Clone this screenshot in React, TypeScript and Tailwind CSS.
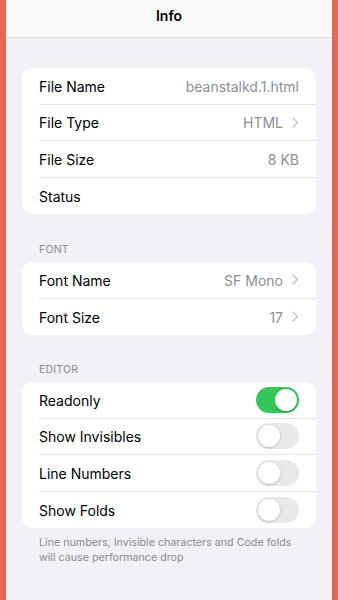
import React from "react";

const Chevron = () => (
  <svg width="7" height="11" viewBox="0 0 7 11" className="ml-[9px]" fill="none">
    <path d="M1.2 1.2L5.4 5.5L1.2 9.8" stroke="#c4c4c7" strokeWidth="1.4" strokeLinecap="round" strokeLinejoin="round" />
  </svg>
);

const Toggle = ({ on }: { on: boolean }) => (
  <div
    className={
      on
        ? "w-[43px] h-[26px] rounded-full bg-[#34c759] p-[2px] flex justify-end"
        : "w-[43px] h-[26px] rounded-full bg-[#e9e9eb] p-[2px] flex justify-start"
    }
  >
    <div className="w-[22px] h-[22px] rounded-full bg-white shadow-[0_1px_3px_rgba(0,0,0,0.2)]" />
  </div>
);

type RowProps = { label: string; value?: string; chevron?: boolean; toggle?: boolean; on?: boolean; last?: boolean };

const Row = ({ label, value, chevron, toggle, on, last }: RowProps) => (
  <div className="pl-[17px]">
    <div
      className={
        last
          ? "h-[36.5px] flex items-center pr-[17px]"
          : "h-[36.5px] flex items-center pr-[17px] border-b border-[#e4e4e7]"
      }
    >
      <span className="flex-1 text-[14px] text-black pt-[1px]">{label}</span>
      {value !== undefined && <span className="text-[14px] text-[#8e8e93] pt-[1px]">{value}</span>}
      {chevron && <Chevron />}
      {toggle && <Toggle on={!!on} />}
    </div>
  </div>
);

const Header = ({ children }: { children: React.ReactNode }) => (
  <div className="pl-[33px] text-[10.5px] leading-[13px] text-[#8a8a8e] tracking-[0.2px] mb-[6px]">{children}</div>
);

export default function App() {
  return (
    <div
      className="w-[338px] h-[600px] bg-[#e8684d] px-[6px] flex"
      style={{ fontFamily: "Inter, 'Noto Sans', sans-serif" }}
    >
      <div className="flex-1 flex flex-col bg-[#f2f2f6] overflow-hidden">
        <div className="h-[38px] bg-[#f9f9f9] border-b border-[#dcdcdf] flex items-center justify-center pb-[6px]">
          <span className="text-[14px] font-semibold text-black">Info</span>
        </div>
        <div className="px-[16px] pt-[30px]">
          <div className="bg-white rounded-[10px] overflow-hidden">
            <Row label="File Name" value="beanstalkd.1.html" />
            <Row label="File Type" value="HTML" chevron />
            <Row label="File Size" value="8 KB" />
            <Row label="Status" last />
          </div>
        </div>
        <div className="mt-[29px]">
          <Header>FONT</Header>
          <div className="px-[16px]">
            <div className="bg-white rounded-[10px] overflow-hidden">
              <Row label="Font Name" value="SF Mono" chevron />
              <Row label="Font Size" value="17" chevron last />
            </div>
          </div>
        </div>
        <div className="mt-[28px]">
          <Header>EDITOR</Header>
          <div className="px-[16px]">
            <div className="bg-white rounded-[10px] overflow-hidden">
              <Row label="Readonly" toggle on />
              <Row label="Show Invisibles" toggle />
              <Row label="Line Numbers" toggle />
              <Row label="Show Folds" toggle last />
            </div>
          </div>
        </div>
        <div className="pl-[33px] pr-[24px] pt-[7px] text-[10.7px] leading-[15px] text-[#8a8a8e]">
          Line numbers, Invisible characters and Code folds will cause performance drop
        </div>
      </div>
    </div>
  );
}
